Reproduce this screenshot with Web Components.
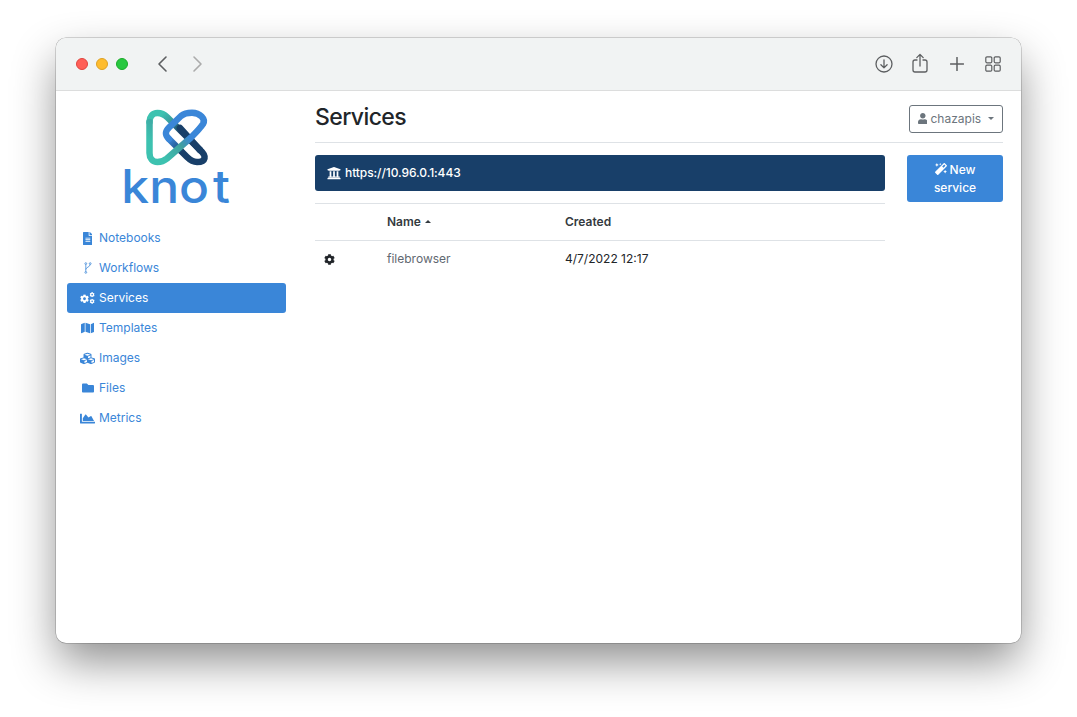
<!DOCTYPE html>
<html lang="en"><head><meta charset="utf-8"><title>Services</title>
<style>
html,body{margin:0;background:#fff;height:717px;overflow:hidden}
body{font-family:Inter,"Liberation Sans",sans-serif;font-size:12px;color:#212529;padding:38px 56px 74px;box-sizing:border-box}
</style></head><body>
<mac-window>
  <side-bar slot="side">
    <knot-logo></knot-logo>
    <nav-item icon="file">Notebooks</nav-item>
    <nav-item icon="branch">Workflows</nav-item>
    <nav-item icon="cogs" active>Services</nav-item>
    <nav-item icon="map">Templates</nav-item>
    <nav-item icon="cubes">Images</nav-item>
    <nav-item icon="folder">Files</nav-item>
    <nav-item icon="chart">Metrics</nav-item>
  </side-bar>
  <page-main>
    <page-header slot="head" title-text="Services"><user-button>chazapis</user-button></page-header>
    <endpoint-bar slot="bar">https://10.96.0.1:443</endpoint-bar>
    <new-button slot="action">New service</new-button>
    <service-table slot="table"></service-table>
  </page-main>
</mac-window>
<script>
const I={
file:[384,'M224 136V0H24C10.7 0 0 10.7 0 24v464c0 13.3 10.7 24 24 24h336c13.3 0 24-10.7 24-24V160H248c-13.2 0-24-10.8-24-24zm64 236c0 6.6-5.4 12-12 12H108c-6.6 0-12-5.4-12-12v-8c0-6.6 5.4-12 12-12h168c6.6 0 12 5.4 12 12v8zm0-64c0 6.6-5.4 12-12 12H108c-6.6 0-12-5.4-12-12v-8c0-6.6 5.4-12 12-12h168c6.6 0 12 5.4 12 12v8zm0-72v8c0 6.6-5.4 12-12 12H108c-6.6 0-12-5.4-12-12v-8c0-6.6 5.4-12 12-12h168c6.6 0 12 5.4 12 12zm96-114.1v6.1H256V0h6.1c6.4 0 12.5 2.5 17 7l97.9 98c4.5 4.5 7 10.6 7 16.9z'],
cog:[512,'M487.4 315.7l-42.6-24.6c4.3-23.2 4.3-47 0-70.2l42.6-24.6c4.9-2.8 7.1-8.6 5.5-14-11.1-35.6-30-67.8-54.7-94.6-3.8-4.1-10-5.1-14.8-2.3L380.8 110c-17.9-15.4-38.5-27.3-60.8-35.1V25.8c0-5.6-3.9-10.5-9.4-11.7-36.7-8.2-74.3-7.8-109.2 0-5.5 1.2-9.4 6.1-9.4 11.7V75c-22.2 7.9-42.8 19.8-60.8 35.1L88.7 85.5c-4.9-2.8-11-1.9-14.8 2.3-24.7 26.7-43.6 58.9-54.7 94.6-1.7 5.4.6 11.2 5.5 14L67.3 221c-4.3 23.2-4.3 47 0 70.2l-42.6 24.6c-4.9 2.8-7.1 8.6-5.5 14 11.1 35.6 30 67.8 54.7 94.6 3.8 4.1 10 5.1 14.8 2.3l42.6-24.6c17.9 15.4 38.5 27.3 60.8 35.1v49.2c0 5.6 3.9 10.5 9.4 11.7 36.7 8.2 74.3 7.8 109.2 0 5.5-1.2 9.4-6.1 9.4-11.7v-49.2c22.2-7.9 42.8-19.8 60.8-35.1l42.6 24.6c4.9 2.8 11 1.9 14.8-2.3 24.7-26.7 43.6-58.9 54.7-94.6 1.5-5.5-.7-11.3-5.6-14.1zM256 336c-44.1 0-80-35.9-80-80s35.9-80 80-80 80 35.9 80 80-35.9 80-80 80z'],
map:[576,'M0 117.66v346.32c0 11.32 11.43 19.06 21.94 14.86L160 416V32L20.12 87.95A32.006 32.006 0 0 0 0 117.66zM192 416l192 64V96L192 32v384zM554.06 33.16L416 96v384l139.88-55.95A31.996 31.996 0 0 0 576 394.34V48.02c0-11.32-11.43-19.06-21.94-14.86z'],
cubes:[512,'M488.6 250.2L392 214V105.5c0-15-9.3-28.4-23.4-33.7l-100-37.5c-8.1-3.1-17.1-3.1-25.3 0l-100 37.5c-14.1 5.3-23.4 18.7-23.4 33.7V214l-96.6 36.2C9.3 255.5 0 268.9 0 283.9V394c0 13.6 7.7 26.1 19.9 32.2l100 50c10.1 5.1 22.1 5.1 32.2 0l103.9-52 103.9 52c10.1 5.1 22.1 5.1 32.2 0l100-50c12.2-6.1 19.9-18.6 19.9-32.2V283.9c0-15-9.3-28.4-23.4-33.7zM358 214.8l-85 31.9v-68.2l85-37v73.3zM154 104.1l102-38.2 102 38.2v.6l-102 41.4-102-41.4v-.6zm84 291.1l-85 42.5v-79.1l85-38.8v75.4zm0-112l-102 41.4-102-41.4v-.6l102-38.2 102 38.2v.6zm240 112l-85 42.5v-79.1l85-38.8v75.4zm0-112l-102 41.4-102-41.4v-.6l102-38.2 102 38.2v.6z'],
folder:[512,'M464 128H272l-64-64H48C21.49 64 0 85.49 0 112v288c0 26.51 21.49 48 48 48h416c26.51 0 48-21.49 48-48V176c0-26.51-21.49-48-48-48z'],
chart:[512,'M500 384c6.6 0 12 5.4 12 12v40c0 6.6-5.4 12-12 12H12c-6.6 0-12-5.4-12-12V76c0-6.6 5.4-12 12-12h40c6.6 0 12 5.4 12 12v308h436zM372.7 159.5L288 216l-85.3-113.7c-5.1-6.8-15.5-6.3-19.9 1L96 248v104h384l-89.9-187.8c-3.2-6.5-11.4-8.7-17.4-4.7z'],
bank:[512,'M496 128v16a8 8 0 0 1-8 8h-24v12c0 6.627-5.373 12-12 12H60c-6.627 0-12-5.373-12-12v-12H24a8 8 0 0 1-8-8v-16a8 8 0 0 1 4.941-7.392l232-88a7.996 7.996 0 0 1 6.118 0l232 88A8 8 0 0 1 496 128zm-24 304H40c-13.255 0-24 10.745-24 24v16a8 8 0 0 0 8 8h464a8 8 0 0 0 8-8v-16c0-13.255-10.745-24-24-24zM96 192v192H60c-6.627 0-12 5.373-12 12v20h416v-20c0-6.627-5.373-12-12-12h-36V192h-64v192h-64V192h-64v192h-64V192H96z'],
user:[448,'M224 256c70.7 0 128-57.3 128-128S294.7 0 224 0 96 57.3 96 128s57.3 128 128 128zm89.6 32h-16.7c-22.2 10.2-46.9 16-72.9 16s-50.6-5.8-72.9-16h-16.7C60.2 288 0 348.2 0 422.4V464c0 26.5 21.5 48 48 48h352c26.5 0 48-21.5 48-48v-41.6c0-74.2-60.2-134.4-134.4-134.4z'],
magic:[512,'M224 96l16-32 32-16-32-16-16-32-16 32-32 16 32 16 16 32zM80 160l26.66-53.33L160 80l-53.34-26.67L80 0 53.34 53.33 0 80l53.34 26.67L80 160zm352 128l-26.66 53.33L352 368l53.34 26.67L432 448l26.66-53.33L512 368l-53.34-26.67L432 288zm70.62-193.77L417.77 9.38C411.53 3.12 403.34 0 395.15 0c-8.19 0-16.38 3.12-22.63 9.38L9.38 372.52c-12.5 12.5-12.5 32.76 0 45.25l84.85 84.85c6.25 6.25 14.44 9.38 22.62 9.38 8.19 0 16.38-3.12 22.63-9.38l363.14-363.15c12.5-12.48 12.5-32.75 0-45.24zM359.45 203.46l-50.91-50.91 86.6-86.6 50.91 50.91-86.6 86.6z']
};
function def(name,html,extra){
  customElements.define(name,class extends HTMLElement{
    constructor(){super();this.attachShadow({mode:'open'}).innerHTML=html}
    connectedCallback(){extra&&extra.call(this)}
  });
}
function svg(n,h,w){
  if(n==='cogs'){const d=I.cog[1];return `<svg viewBox="0 0 640 512" height="${h}" fill="currentColor" style="display:block"><svg x="0" y="96" width="384" height="384" viewBox="0 0 512 512"><path d="${d}"/></svg><svg x="404" y="0" width="226" height="226" viewBox="0 0 512 512"><path d="${d}"/></svg><svg x="404" y="286" width="226" height="226" viewBox="0 0 512 512"><path d="${d}"/></svg></svg>`}
  if(n==='branch'){return `<svg viewBox="0 0 8 12" width="8" height="12" fill="none" stroke="currentColor" stroke-width=".9" stroke-opacity=".85" style="display:block"><circle cx="1.800" cy="1.600" r=".9"/><circle cx="6.200" cy="1.600" r=".9"/><circle cx="1.800" cy="10.400" r=".9"/><path d="M1.800 2.500v7M6.200 2.500c0 2.500-4.400 2.700-4.400 5"/></svg>`}
  const [vw,d]=I[n];const wa=w?`width="${w}" preserveAspectRatio="none"`:'';
  return `<svg viewBox="0 0 ${vw} 512" height="${h}" ${wa} fill="currentColor" style="display:block"><path d="${d}"/></svg>`;
}
const sizes={file:[13],branch:[12],cogs:[12],map:[12],cubes:[13,15],folder:[12,12],chart:[13,15]};
def('mac-toolbar',`<style>
:host{display:flex;align-items:center;height:52px;border-bottom:1px solid #dcdddd;background:#f1f3f3;padding:0 20px;flex:none}
.l{width:12px;height:12px;border-radius:50%;margin-right:8px;box-sizing:border-box}
svg{display:block;fill:none;stroke:#5d5f61;stroke-width:1.5;stroke-linecap:round;stroke-linejoin:round}
.g{flex:1}
</style>
<span class="l" style="background:#ff5f57;border:.5px solid #e0443e"></span>
<span class="l" style="background:#febc2e;border:.5px solid #dea123"></span>
<span class="l" style="background:#28c840;border:.5px solid #1aab29;margin-right:28px"></span>
<svg width="12" height="18" viewBox="0 0 12 18" style="stroke-width:1.6"><path d="M10 2 3 9l7 7"/></svg>
<svg width="12" height="18" viewBox="0 0 12 18" style="margin-left:24px;stroke:#ababab;stroke-width:1.6"><path d="M2 2l7 7-7 7"/></svg>
<span class="g"></span>
<svg width="18" height="18" viewBox="0 0 18 18" style="stroke-width:1.3"><circle cx="9" cy="9" r="8"/><path d="M9 4.800v8M5.900 9.800 9 12.900l3.100-3.100"/></svg>
<svg width="16" height="20" viewBox="0 0 16 20" style="margin-left:19px;margin-top:-3px;stroke-width:1.3"><path d="M5 7H3a2 2 0 0 0-2 2v8a2 2 0 0 0 2 2h10a2 2 0 0 0 2-2V9a2 2 0 0 0-2-2h-2M8 13V1.500M4.800 4.600 8 1.400l3.200 3.200"/></svg>
<svg width="14" height="14" viewBox="0 0 14 14" style="margin-left:22px;stroke-width:1.500"><path d="M7 .5v13M.5 7h13"/></svg>
<svg width="16" height="16" viewBox="0 0 16 16" style="margin-left:21px;stroke-width:1.200"><rect x=".8" y=".8" width="6" height="6" rx="1.200"/><rect x="9.200" y=".8" width="6" height="6" rx="1.200"/><rect x=".8" y="9.200" width="6" height="6" rx="1.200"/><rect x="9.200" y="9.200" width="6" height="6" rx="1.200"/></svg>`);
def('mac-window',`<style>
:host{display:flex;flex-direction:column;height:605px;border-radius:10px;overflow:hidden;background:#fff;box-shadow:0 0 0 .5px rgba(0,0,0,.3),0 20px 45px -2px rgba(0,0,0,.45)}
.b{display:grid;grid-template-columns:259px 1fr;flex:1}
</style><mac-toolbar></mac-toolbar><div class="b"><slot name="side"></slot><slot></slot></div>`);
def('side-bar',`<style>:host{display:flex;flex-direction:column;padding:0 29px 0 11px}</style><slot></slot>`);
def('knot-logo',`<style>:host{display:block;height:132px;flex:none}svg{display:block}</style>
<svg width="219" height="132" viewBox="67 91 219 132" fill="none" stroke-linecap="round" stroke-linejoin="round">
<defs>
<linearGradient id="a" gradientUnits="userSpaceOnUse" x1="163" y1="113" x2="181" y2="131"><stop offset="0" stop-color="#3dc2b0"/><stop offset=".45" stop-color="#3a9a9c"/><stop offset="1" stop-color="#183f69"/></linearGradient>
<linearGradient id="b" gradientUnits="userSpaceOnUse" x1="181" y1="153" x2="168" y2="140"><stop offset="0" stop-color="#183f69"/><stop offset="1" stop-color="#3a86d8"/></linearGradient>
<linearGradient id="c" gradientUnits="userSpaceOnUse" x1="191" y1="139" x2="165" y2="160"><stop offset="0" stop-color="#3a86d8"/><stop offset=".35" stop-color="#3f9f9f"/><stop offset="1" stop-color="#3dc2b0"/></linearGradient>
</defs>
<g stroke-width="6.500">
<path stroke="url(#a)" d="M149.500 122C149.500 117 152.500 113 157.500 113C161.500 113 164.500 114.500 167.500 117.500L200 150"/>
<path stroke="#183f69" d="M200 150C207 156 206 162 197 162C192.500 162 190 160 187 157L178 148"/>
<path stroke="url(#b)" d="M181 151L169 139"/>
<path stroke="#3a86d8" d="M169 139C164.500 134.500 165 131.500 169 127.500L181 116C184 113.500 187.500 112.800 192 112.800C200 112.800 206 119 203 124C201 127 198 130.500 191 137.500"/>
<path stroke="#183f69" d="M180 128L200 150"/>
<path stroke="url(#c)" d="M191 137.500L167 158.500C164 161 161 162 157.500 162C152.500 162 149.500 158 149.500 153V122"/>
</g>
<text transform="translate(121.300 203) scale(1.08 1)" fill="#3a86d8" font-family="Inter,'Liberation Sans',sans-serif" font-size="46" font-weight="500" x="0 25.900 53.400 85">knot</text>
</svg>`);
def('nav-item',`<style>
:host{display:flex;align-items:center;height:30px;box-sizing:border-box;padding:0 0 2px 13px;border-radius:3px;color:#3a86d8;flex:none}
:host([active]){background:#3a86d8;color:#fff}
.i{width:15px;margin-right:4px;display:flex;justify-content:center;position:relative;top:1px}
</style><span class="i" id="i"></span><slot></slot>`,function(){
  const n=this.getAttribute('icon'),[h,w]=sizes[n];this.shadowRoot.getElementById('i').innerHTML=svg(n,h,w);
});
def('page-main',`<style>
:host{display:grid;grid-template-columns:570px 1fr;grid-template-rows:auto auto 1fr;column-gap:22px;padding-right:18px;align-content:start}
slot{display:contents}
</style><slot name="head"></slot><slot name="bar"></slot><slot name="action"></slot><slot name="table"></slot>`);
def('page-header',`<style>
:host{grid-column:1/-1;display:flex;justify-content:space-between;align-items:center;height:52px;box-sizing:border-box;border-bottom:1px solid #dee2e6;margin-bottom:12px}
h1{font-size:23px;letter-spacing:-.6px;font-weight:500;margin:0;line-height:29px;padding-top:2px}
</style><h1 id="t"></h1><slot></slot>`,function(){this.shadowRoot.getElementById('t').textContent=this.getAttribute('title-text')});
def('user-button',`<style>
:host{display:inline-flex;align-items:center;height:26px;width:92px;border:1px solid #6c757d;border-radius:3px;color:#6c757d;justify-content:center;gap:3px;margin-top:4px}
.c{width:0;height:0;border:3.500px solid transparent;border-top-color:currentColor;border-bottom:0;margin-left:4px}
</style><span id="u" style="display:flex"></span><slot></slot><span class="c"></span>`,function(){this.shadowRoot.getElementById('u').innerHTML=svg('user',11)});
def('endpoint-bar',`<style>
:host{grid-column:1;display:flex;align-items:center;height:36px;box-sizing:border-box;padding:0 0 2px 12px;background:#183f69;color:#fff;border-radius:3px;font-weight:500;gap:4px;letter-spacing:-.08px}
span{position:relative;top:1px}
</style><span id="u"></span><slot></slot>`,function(){this.shadowRoot.getElementById('u').innerHTML=svg('bank',14)});
def('new-button',`<style>
:host{grid-column:2;grid-row:2/4;align-self:start;display:block;height:47px;background:#3a86d8;color:#fff;border-radius:3px;text-align:center;line-height:18px;font-weight:500;padding-top:6px;box-sizing:border-box}
span{display:inline-block;vertical-align:-1px;margin-right:3px}
</style><span id="u"></span>New<br>service`,function(){this.shadowRoot.getElementById('u').innerHTML=svg('magic',12);});
def('service-table',`<style>
:host{grid-column:1;display:grid;grid-template-columns:72px 178px 1fr;align-self:start;margin-top:12px}
div{display:flex;align-items:center;height:37px;box-sizing:border-box;padding-bottom:2px}
.h{font-weight:600;border-top:1px solid #dee2e6;border-bottom:1px solid #dee2e6;height:38px;color:#343a40}
.c{width:0;height:0;border:3.500px solid transparent;border-bottom-color:currentColor;border-top:0;margin-left:4px}
.n{color:#5f6871}
.g{padding:0 0 0 9px}
</style><div class="h"></div><div class="h">Name<span class="c"></span></div><div class="h">Created</div>
<div class="g" id="g"></div><div class="n">filebrowser</div><div>4/7/2022 12:17</div>`,function(){this.shadowRoot.getElementById('g').innerHTML=svg('cog',11)});
</script>
</body></html>
